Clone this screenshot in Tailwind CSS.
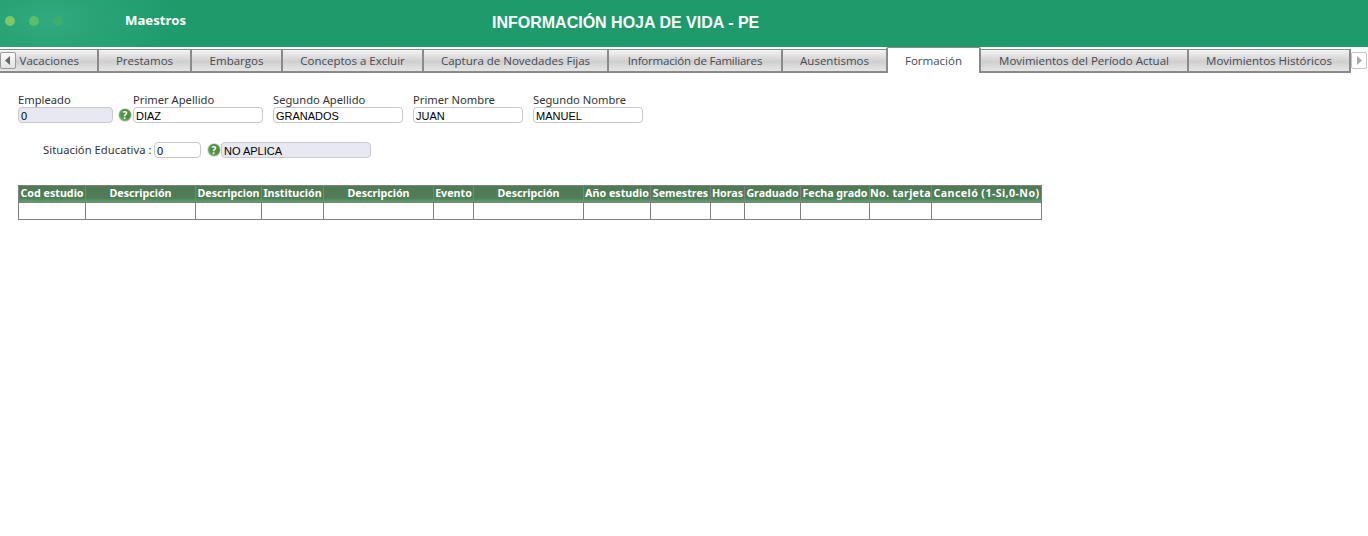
<!DOCTYPE html>
<html lang="es">
<head>
<meta charset="utf-8">
<script src="https://cdn.jsdelivr.net/npm/@tailwindcss/browser@4"></script>
<title>Información Hoja de Vida</title>
</head>
<body class="bg-white overflow-hidden font-['Open_Sans',sans-serif]">
<div class="w-[1368px] h-[536px] flex flex-col">
  <header class="relative h-[47px] shrink-0 flex items-start bg-[radial-gradient(ellipse_130px_70px_at_50px_20px,#30aa7e,#1e9a6b)]">
    <div class="flex items-center pl-[5px] h-[42px]">
      <span class="w-[10px] h-[10px] rounded-full bg-[#7cc866]"></span>
      <span class="w-[10px] h-[10px] rounded-full bg-[#5dbd6a] ml-[14px]"></span>
      <span class="w-[10px] h-[10px] rounded-full bg-[#3eae6e] ml-[14px]"></span>
      <span class="ml-[62px] text-white text-[13.2px] font-bold font-['Noto_Sans',sans-serif]">Maestros</span>
    </div>
    <h1 class="absolute left-[492px] top-[13px] text-white text-[16px] leading-[20px] font-bold font-['Liberation_Sans',sans-serif]">INFORMACIÓN HOJA DE VIDA - PE</h1>
  </header>

  <nav class="relative h-[26px] shrink-0 flex items-end text-[11.5px] text-[#444a55]">
    <div class="w-[97px] h-[24px] shrink-0 flex items-center justify-end overflow-hidden whitespace-nowrap pr-[18px] border-t border-b-2 border-[#8a8a8a] bg-[linear-gradient(#f4f4f4,#cfcfcf_55%,#e6e6e6)]">de Vacaciones</div>
    <div class="w-[93px] h-[24px] shrink-0 flex items-center justify-center border-2 border-t border-r-0 border-[#8a8a8a] bg-[linear-gradient(#f4f4f4,#cfcfcf_55%,#e6e6e6)]">Prestamos</div>
    <div class="w-[91px] h-[24px] shrink-0 flex items-center justify-center border-2 border-t border-r-0 border-[#8a8a8a] bg-[linear-gradient(#f4f4f4,#cfcfcf_55%,#e6e6e6)]">Embargos</div>
    <div class="w-[141px] h-[24px] shrink-0 flex items-center justify-center border-2 border-t border-r-0 border-[#8a8a8a] bg-[linear-gradient(#f4f4f4,#cfcfcf_55%,#e6e6e6)]">Conceptos a Excluir</div>
    <div class="w-[185px] h-[24px] shrink-0 flex items-center justify-center border-2 border-t border-r-0 border-[#8a8a8a] bg-[linear-gradient(#f4f4f4,#cfcfcf_55%,#e6e6e6)]">Captura de Novedades Fijas</div>
    <div class="w-[174px] h-[24px] shrink-0 flex items-center justify-center border-2 border-t border-r-0 border-[#8a8a8a] bg-[linear-gradient(#f4f4f4,#cfcfcf_55%,#e6e6e6)] tracking-[-0.2px]">Información de Familiares</div>
    <div class="w-[105px] h-[24px] shrink-0 flex items-center justify-center border-2 border-t border-r-0 border-[#8a8a8a] bg-[linear-gradient(#f4f4f4,#cfcfcf_55%,#e6e6e6)]">Ausentismos</div>
    <div class="w-[95px] h-[26px] shrink-0 flex items-center justify-center border-2 border-t border-b-0 border-[#8a8a8a] rounded-t-[2px] bg-white">Formación</div>
    <div class="w-[208px] h-[24px] shrink-0 flex items-center justify-center border-t border-b-2 border-r-2 border-[#8a8a8a] bg-[linear-gradient(#f4f4f4,#cfcfcf_55%,#e6e6e6)]">Movimientos del Período Actual</div>
    <div class="w-[162px] h-[24px] shrink-0 flex items-center justify-center border-t border-b-2 border-r-2 border-[#8a8a8a] bg-[linear-gradient(#f4f4f4,#cfcfcf_55%,#e6e6e6)]">Movimientos Históricos</div>
    <div class="absolute left-0 top-[5px] w-[16px] h-[17px] flex items-center justify-center border border-[#9a9a9a] rounded-[2px] bg-[linear-gradient(#fafafa,#e2e2e2)]">
      <svg width="6" height="9" viewBox="0 0 6 9"><path d="M5 0v9L0 4.5z" fill="#666"/></svg>
    </div>
    <div class="absolute left-[1351px] top-[5px] w-[16px] h-[17px] flex items-center justify-center border border-[#c4c4c4] rounded-[2px] bg-white">
      <svg width="6" height="9" viewBox="0 0 6 9"><path d="M1 0v9l5-4.500z" fill="#aaa"/></svg>
    </div>
  </nav>

  <main class="flex-1 pl-[18px] font-['Noto_Sans',sans-serif] text-[11.2px] text-[#333]">
    <div class="flex items-end pt-[20px]">
      <div class="flex flex-col w-[95px]">
        <label class="h-[14px] leading-[14px]">Empleado</label>
        <div class="h-[16px] border border-[#c8c8d0] rounded-[4px] bg-[#e8e8f0] pt-[1px] px-[2px] text-[11px] leading-[15px] font-['Liberation_Sans',sans-serif] text-black">0</div>
      </div>
      <span class="w-[14px] h-[14px] ml-[5px] mr-[1px] mb-[1px] rounded-full bg-[radial-gradient(circle_at_60%_40%,#4f8f45_45%,#9cc98a)] border border-[#d4e6c8] text-white text-[10px] leading-[12px] font-bold text-center">?</span>
      <div class="flex flex-col w-[130px]">
        <label class="h-[14px] leading-[14px]">Primer Apellido</label>
        <div class="h-[16px] border border-[#c8c8c8] rounded-[4px] bg-white pt-[1px] px-[2px] text-[11px] leading-[15px] font-['Liberation_Sans',sans-serif] text-black">DIAZ</div>
      </div>
      <div class="flex flex-col w-[130px] ml-[10px]">
        <label class="h-[14px] leading-[14px]">Segundo Apellido</label>
        <div class="h-[16px] border border-[#c8c8c8] rounded-[4px] bg-white pt-[1px] px-[2px] text-[11px] leading-[15px] font-['Liberation_Sans',sans-serif] text-black">GRANADOS</div>
      </div>
      <div class="flex flex-col w-[110px] ml-[10px]">
        <label class="h-[14px] leading-[14px]">Primer Nombre</label>
        <div class="h-[16px] border border-[#c8c8c8] rounded-[4px] bg-white pt-[1px] px-[2px] text-[11px] leading-[15px] font-['Liberation_Sans',sans-serif] text-black">JUAN</div>
      </div>
      <div class="flex flex-col w-[110px] ml-[10px]">
        <label class="h-[14px] leading-[14px]">Segundo Nombre</label>
        <div class="h-[16px] border border-[#c8c8c8] rounded-[4px] bg-white pt-[1px] px-[2px] text-[11px] leading-[15px] font-['Liberation_Sans',sans-serif] text-black">MANUEL</div>
      </div>
    </div>

    <div class="flex items-center mt-[19px] pl-[25px] h-[16px]">
      <label class="w-[111px] whitespace-nowrap tracking-[0.05px]">Situación Educativa&nbsp;:</label>
      <div class="w-[47px] h-[16px] border border-[#c8c8c8] rounded-[4px] bg-white pt-[1px] px-[2px] text-[11px] leading-[15px] font-['Liberation_Sans',sans-serif] text-black">0</div>
      <span class="w-[14px] h-[14px] ml-[6px] rounded-full bg-[radial-gradient(circle_at_60%_40%,#4f8f45_45%,#9cc98a)] border border-[#d4e6c8] text-white text-[10px] leading-[12px] font-bold text-center">?</span>
      <div class="w-[150px] h-[16px] border border-[#c8c8d0] rounded-[4px] bg-[#e8e8f0] pt-[1px] px-[2px] text-[11px] leading-[15px] font-['Liberation_Sans',sans-serif] text-black">NO APLICA</div>
    </div>

    <table class="mt-[27px] w-[1024px] table-fixed border-collapse border border-[#808080] font-['Noto_Sans',sans-serif] text-[10.7px]">
      <colgroup>
        <col class="w-[67px]"><col class="w-[110px]"><col class="w-[66px]"><col class="w-[62px]"><col class="w-[110px]"><col class="w-[40px]"><col class="w-[110px]"><col class="w-[67px]"><col class="w-[60px]"><col class="w-[34px]"><col class="w-[56px]"><col class="w-[69px]"><col class="w-[62px]"><col class="w-[110px]">
      </colgroup>
      <thead>
        <tr class="h-[17px] text-white bg-[linear-gradient(#4f7a55,#4f7d57_70%,#63a877)]">
          <th class="border border-[#808080] p-0 pb-[1px] leading-[15px] font-bold whitespace-nowrap">Cod estudio</th>
          <th class="border border-[#808080] p-0 pb-[1px] leading-[15px] font-bold whitespace-nowrap">Descripción</th>
          <th class="border border-[#808080] p-0 pb-[1px] leading-[15px] font-bold whitespace-nowrap">Descripcion</th>
          <th class="border border-[#808080] p-0 pb-[1px] leading-[15px] font-bold whitespace-nowrap">Institución</th>
          <th class="border border-[#808080] p-0 pb-[1px] leading-[15px] font-bold whitespace-nowrap">Descripción</th>
          <th class="border border-[#808080] p-0 pb-[1px] leading-[15px] font-bold whitespace-nowrap">Evento</th>
          <th class="border border-[#808080] p-0 pb-[1px] leading-[15px] font-bold whitespace-nowrap">Descripción</th>
          <th class="border border-[#808080] p-0 pb-[1px] leading-[15px] font-bold whitespace-nowrap">Año estudio</th>
          <th class="border border-[#808080] p-0 pb-[1px] leading-[15px] font-bold whitespace-nowrap">Semestres</th>
          <th class="border border-[#808080] p-0 pb-[1px] leading-[15px] font-bold whitespace-nowrap">Horas</th>
          <th class="border border-[#808080] p-0 pb-[1px] leading-[15px] font-bold whitespace-nowrap">Graduado</th>
          <th class="border border-[#808080] p-0 pb-[1px] leading-[15px] font-bold whitespace-nowrap">Fecha grado</th>
          <th class="border border-[#808080] p-0 pb-[1px] leading-[15px] font-bold whitespace-nowrap tracking-[0.3px]">No. tarjeta</th>
          <th class="border border-[#808080] p-0 pb-[1px] leading-[15px] font-bold whitespace-nowrap tracking-[0.39px]">Canceló (1-Si,0-No)</th>
        </tr>
      </thead>
      <tbody>
        <tr class="h-[17px]">
          <td class="border border-[#808080] p-0"></td><td class="border border-[#808080] p-0"></td><td class="border border-[#808080] p-0"></td><td class="border border-[#808080] p-0"></td><td class="border border-[#808080] p-0"></td><td class="border border-[#808080] p-0"></td><td class="border border-[#808080] p-0"></td><td class="border border-[#808080] p-0"></td><td class="border border-[#808080] p-0"></td><td class="border border-[#808080] p-0"></td><td class="border border-[#808080] p-0"></td><td class="border border-[#808080] p-0"></td><td class="border border-[#808080] p-0"></td><td class="border border-[#808080] p-0"></td>
        </tr>
      </tbody>
    </table>
  </main>
</div>
</body>
</html>
